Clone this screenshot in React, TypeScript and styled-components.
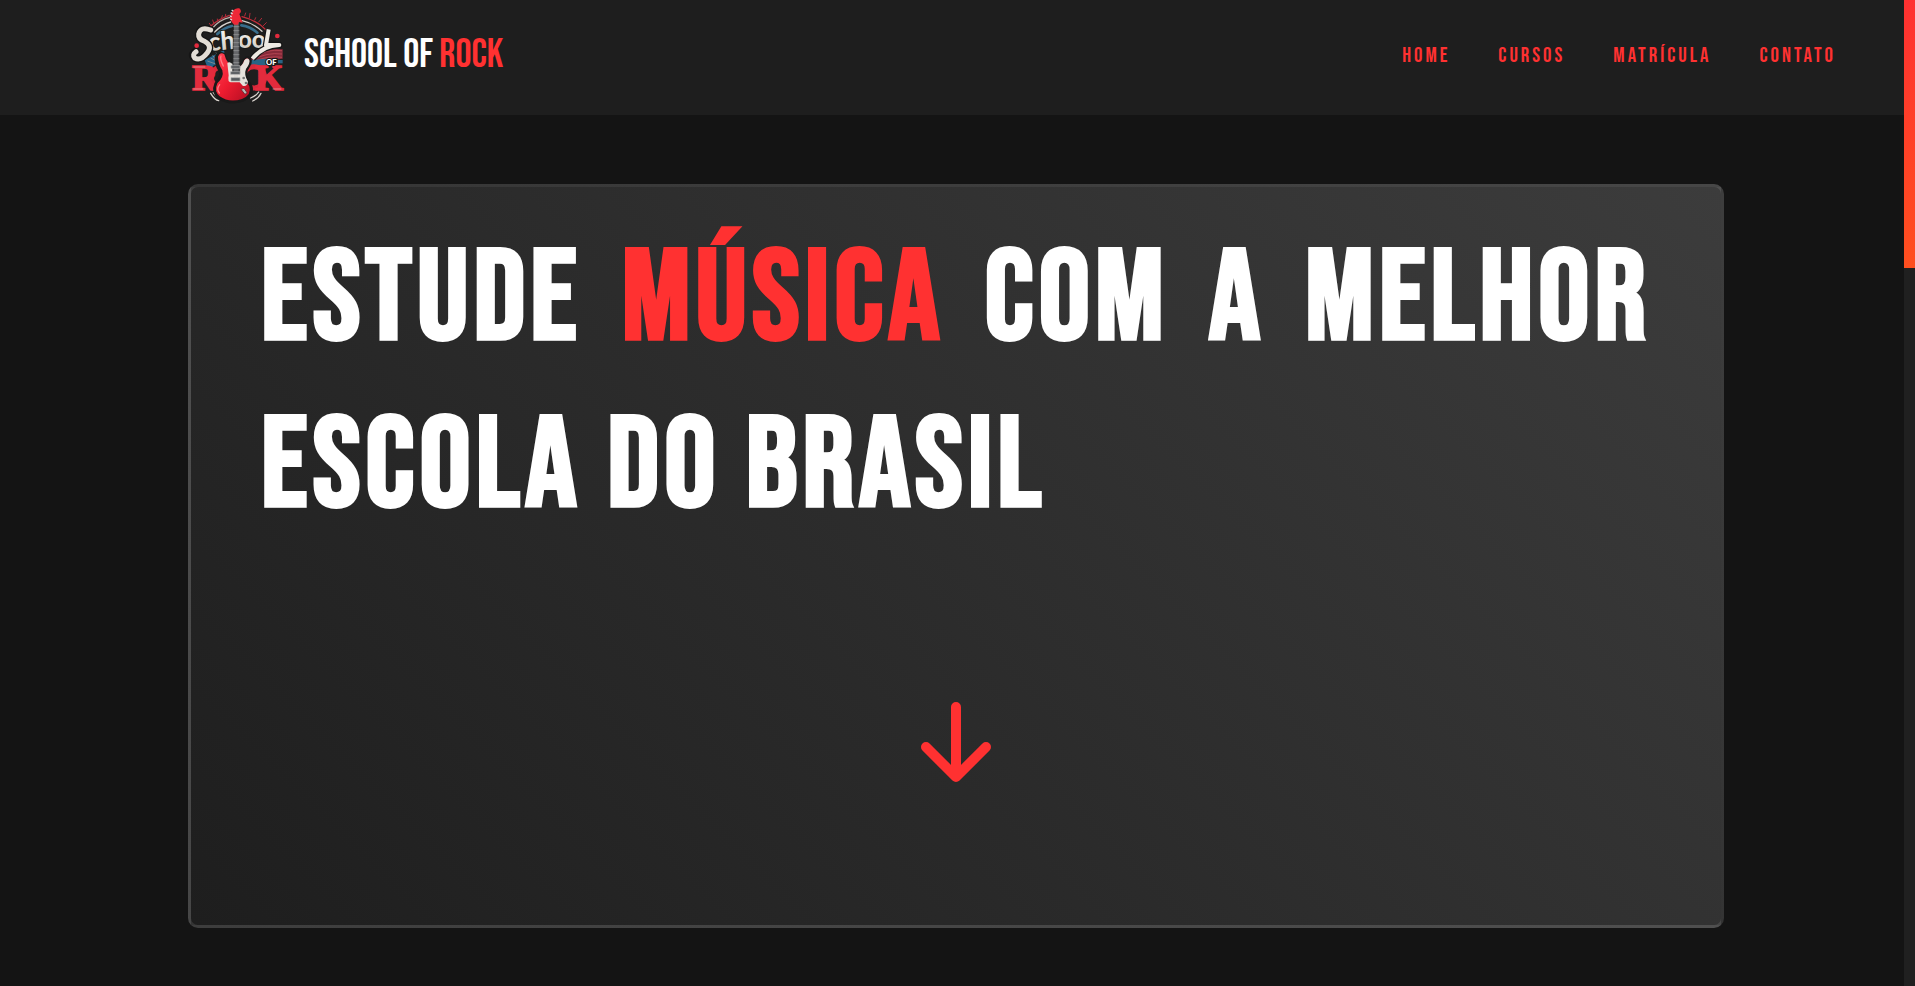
import styled, { createGlobalStyle } from 'styled-components';

const red = '#ff3131';

const GlobalStyle = createGlobalStyle`
  *, *::before, *::after { box-sizing: border-box; }
  body {
    margin: 0;
    background: #141414;
    color: #fff;
    font-family: "Bebas Neue", "Oswald", "Roboto Condensed", sans-serif;
  }
`;

const Shell = styled.div`
  display: grid;
  grid-template-columns: minmax(0, 1fr) 11px;
  min-height: 100vh;
`;

const Page = styled.div`
  display: flex;
  flex-direction: column;
`;

const Header = styled.header`
  display: flex;
  align-items: center;
  justify-content: space-between;
  padding: 0 68px 0 180px;
  background: #1e1e1e;
`;

const Brand = styled.a`
  display: flex;
  align-items: center;
  gap: 14px;
  color: #fff;
  font-size: 40px;
  line-height: 50px;
  text-decoration: none;
`;

const BrandName = styled.span`
  padding-bottom: 6px;
`;

const Accent = styled.span`
  color: ${red};
`;

const Nav = styled.nav`
  display: flex;
  gap: 48px;
  padding-bottom: 4px;
`;

const NavLink = styled.a`
  color: ${red};
  font-size: 21px;
  line-height: 28px;
  letter-spacing: 3px;
  text-decoration: none;
`;

const Main = styled.main`
  flex: 1;
  display: flex;
  padding: 69px 180px 58px 188px;
`;

const Hero = styled.section`
  flex: 1;
  display: flex;
  flex-direction: column;
  justify-content: space-between;
  align-items: center;
  padding: 30px 70px 142px;
  border: 3px solid rgba(255, 255, 255, 0.1);
  border-radius: 10px;
  background: linear-gradient(45deg, #1e1e1e, #3c3c3c);
`;

const Title = styled.h1`
  width: 100%;
  margin: 0;
  font-size: 128px;
  font-weight: 700;
  line-height: 167px;
  letter-spacing: 5px;
  text-align: justify;
`;

const DownLink = styled.a`
  display: block;
  line-height: 0;
`;

const ScrollTrack = styled.div`
  background: #202020;
`;

const ScrollThumb = styled.div`
  height: 268px;
  background: linear-gradient(${red}, #ff4f1f);
`;

const links = ['Home', 'Cursos', 'Matrícula', 'Contato'];

function Logo() {
  return (
    <svg width="110" height="115" viewBox="0 0 330 345" role="img" aria-label="School of Rock">
      <defs>
        <linearGradient id="cream" x1="0" y1="0" x2="0" y2="1">
          <stop offset="0" stopColor="#fff" />
          <stop offset="1" stopColor="#cbc4ba" />
        </linearGradient>
        <linearGradient id="body" x1="0" y1="0" x2="1" y2="1">
          <stop offset="0" stopColor="#ff4455" />
          <stop offset="0.5" stopColor="#ee1c30" />
          <stop offset="1" stopColor="#b20d22" />
        </linearGradient>
      </defs>

      {/* arcs and sparks behind the lettering */}
      <g fill="none" strokeLinecap="round">
        <path d="M94 88Q118 58 150 52" stroke="#b9b2ac" strokeWidth="4" />
        <path d="M90 80Q114 58 148 46" stroke="#b8303d" strokeWidth="4" />
        <path d="M104 96Q128 72 152 66" stroke="#d8d4cf" strokeWidth="4" />
        <path d="M112 102Q134 82 156 78" stroke="#386d8c" strokeWidth="8" />
        <path d="M186 50Q232 62 258 90" stroke="#c52e3b" strokeWidth="4" />
        <path d="M186 62Q222 70 246 94" stroke="#d3cdc7" strokeWidth="4" />
        <path d="M184 76Q212 80 232 98" stroke="#386d8c" strokeWidth="8" />
        <path d="M94 78l-6-8M102 72l-4-12M113 64l-1-7M124 56l3-9M136 50l1-7M194 48l3-9M208 54l2-14M224 60l3-7M236 66l9-11M250 77l9-9" stroke="#ad2b39" strokeWidth="3" />
        <path d="M92 280Q104 300 116 302M100 278Q108 290 116 293M218 303Q236 295 243 280M212 294Q228 288 236 276" stroke="#d8d2cc" strokeWidth="4" />
      </g>
      <path d="M74 180L132 150 138 196 102 196 86 214Z" fill="#24648a" />
      <path d="M98 166l22 30M108 158l18 30M82 183l34 12M92 174l30 16" stroke="#7b8790" strokeWidth="3" />
      <path d="M122 160l12 26M104 172l14 22" stroke="#c92c3d" strokeWidth="4" />
      <path d="M208 180Q252 140 308 148L308 176 220 186Z" fill="#872b3a" />
      <path d="M216 172Q260 146 306 152M218 180Q260 156 306 162M222 184Q266 166 306 172" fill="none" stroke="#c8525d" strokeWidth="2" />
      <path d="M210 180L258 176 258 196 216 200Z" fill="#286485" />
      <path d="M294 180H308V190H294Z" fill="#286485" />

      {/* lettering */}
      <g fontFamily="Lato, sans-serif" fontWeight="900" fill="url(#cream)" stroke="#171717" strokeWidth="5" paintOrder="stroke">
        <text x="87" y="153" fontSize="76" transform="rotate(-5 87 153)">ch</text>
        <text x="174" y="144" fontSize="72">oo</text>
      </g>
      <path d="M92 90Q62 78 56 102Q54 118 74 124Q98 137 82 158Q62 184 44 174Q30 164 48 153" fill="none" stroke="#151515" strokeWidth="23" strokeLinecap="round" />
      <path d="M92 90Q62 78 56 102Q54 118 74 124Q98 137 82 158Q62 184 44 174Q36 164 48 155" fill="none" stroke="#e2ddd5" strokeWidth="15" strokeLinecap="round" />
      <path d="M266 88L258 135H298Q250 136 217 176" fill="none" stroke="#151515" strokeWidth="19" strokeLinejoin="round" />
      <path d="M266 88L258 135H298Q250 136 217 176" fill="none" stroke="#eeeae3" strokeWidth="12" strokeLinejoin="round" />
      <circle cx="50" cy="137" r="7" fill="#e32a3d" />
      <circle cx="292" cy="108" r="7" fill="#e32a3d" />
      <circle cx="126" cy="232" r="32" fill="none" stroke="#d9283a" strokeWidth="15" />
      <circle cx="222" cy="232" r="32" fill="none" stroke="#d9283a" strokeWidth="15" />
      <g fontFamily="Liberation Serif, serif" fontWeight="700" fontSize="108" fill="#e32b3d" stroke="#e32b3d" strokeWidth="5" paintOrder="stroke">
        <text x="36" y="269">R</text>
        <text x="226" y="269">K</text>
      </g>
      <path d="M40 201H76M40 267H70M278 267H304" stroke="#f4b9b9" strokeWidth="2" />
      <text x="258" y="195" fontFamily="Lato, sans-serif" fontWeight="900" fontSize="23" fill="#fff" stroke="#171717" strokeWidth="6" paintOrder="stroke">OF</text>

      {/* guitar */}
      <path d="M133 163Q112 151 108 174Q107 193 119 211Q128 228 107 251Q96 276 117 294Q147 315 189 301Q222 286 213 257Q192 232 200 209Q217 184 209 176Q198 166 188 188Q180 204 164 198Q141 196 133 163Z" fill="#191919" stroke="#191919" strokeWidth="8" />
      <path d="M133 163Q121 154 114 170Q114 190 127 211Q133 231 112 250Q101 274 119 289Q147 309 186 297Q216 285 208 259Q186 232 196 208Q211 188 207 178Q196 170 190 188Q181 207 164 200Q141 196 133 163Z" fill="url(#body)" />
      <path d="M123 168Q119 176 130 198M119 254Q108 268 118 279" fill="none" stroke="#ff7d85" strokeWidth="4" strokeLinecap="round" />
      <path d="M142 190Q147 184 154 190L179 200Q188 196 193 181Q201 171 208 180Q211 190 198 207Q191 224 204 245Q201 261 188 257L179 247H153Q142 248 146 226Z" fill="#e6e2dc" />
      <path d="M161 64L178 64 179 218H158Z" fill="#55575a" stroke="#232323" strokeWidth="2" />
      <path d="M160 80H178M160 92H178M160 104H178M160 116H178M160 128H178M160 140H178M160 152H178M160 164H178M160 176H178M160 188H178" stroke="#9a9a9a" strokeWidth="2" />
      <path d="M165 66V240M171 66V240" stroke="#b8b8b8" />
      <path d="M153 197H180V205H153ZM152 215H180V223H152ZM153 233H180V243H153Z" fill="#55595c" stroke="#aaa" strokeWidth="2" />
      <path d="M158 70L149 56Q151 42 158 34Q166 22 178 25Q188 34 178 42L188 68 177 66 174 74H163Z" fill="#ee2837" />
      <path d="M155 30l5 4M152 38l6 4M150 47l5 4M151 57l5 3" stroke="#dedede" strokeWidth="4" />
      <circle cx="191" cy="234" r="4" fill="#777" />
      <circle cx="198" cy="249" r="4" fill="#777" />
      <path d="M183 268L192 265 201 278 195 283Z" fill="#bcb9b9" stroke="#492227" strokeWidth="2" />
    </svg>
  );
}

export default function App() {
  return (
    <>
      <GlobalStyle />
      <Shell>
        <Page>
          <Header>
            <Brand href="#home">
              <Logo />
              <BrandName>School of <Accent>Rock</Accent></BrandName>
            </Brand>
            <Nav aria-label="Principal">
              {links.map(label => (
                <NavLink key={label} href={`#${label.toLowerCase()}`}>{label}</NavLink>
              ))}
            </Nav>
          </Header>
          <Main>
            <Hero>
              <Title>Estude <Accent>música</Accent> com a melhor escola do Brasil</Title>
              <DownLink href="#cursos" aria-label="Ver cursos">
                <svg width="72" height="82" viewBox="0 0 72 82" fill="none" stroke={red} strokeWidth="10" strokeLinecap="round" strokeLinejoin="round">
                  <path d="M36 6V76M6 46L36 76L66 46" />
                </svg>
              </DownLink>
            </Hero>
          </Main>
        </Page>
        <ScrollTrack><ScrollThumb /></ScrollTrack>
      </Shell>
    </>
  );
}
